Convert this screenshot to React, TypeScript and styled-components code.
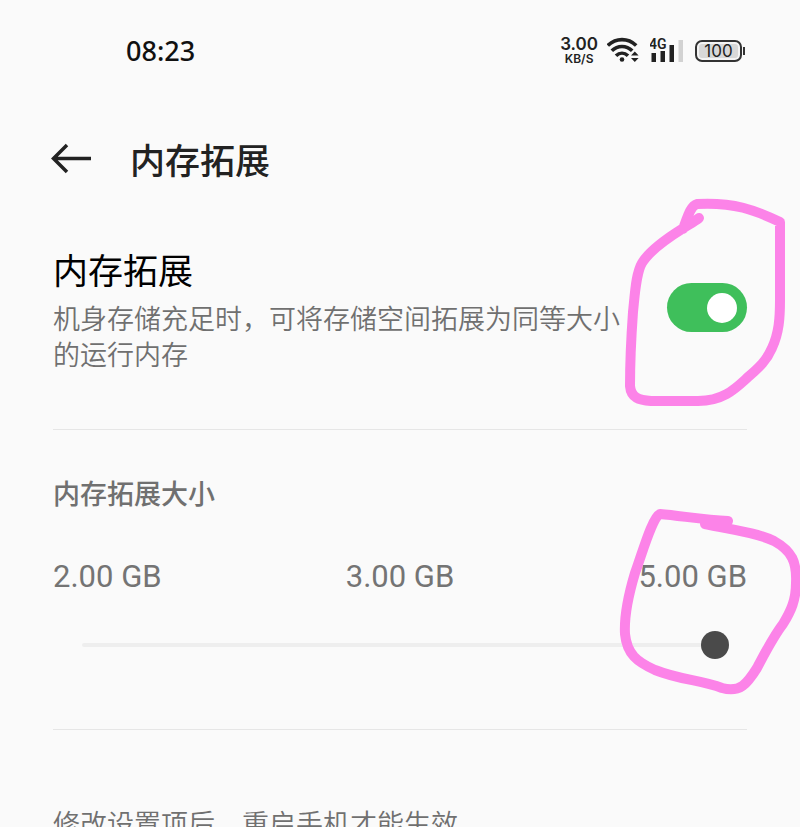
import React, { useState } from 'react';
import styled, { createGlobalStyle } from 'styled-components';

const GlobalStyle = createGlobalStyle`
  html {
    scrollbar-width: none;
  }
  body {
    margin: 0;
    background: #fafafa;
    overflow-x: hidden;
  }
  *, *::before, *::after {
    box-sizing: border-box;
  }
`;

const cjk = '"Noto Sans CJK SC", sans-serif';

const Page = styled.div`
  overflow-x: hidden;
  background: #fafafa;
  color: #222;
  font-family: ${cjk};
`;

const StatusBar = styled.div`
  display: flex;
  align-items: center;
  justify-content: space-between;
  height: 102px;
  padding: 0 55px 0 126px;
`;

const Clock = styled.time`
  font: 500 27px/32px "Noto Sans", sans-serif;
  color: #111;
`;

const StatusIcons = styled.div`
  display: flex;
  align-items: center;
  gap: 9px;
`;

const NetSpeed = styled.div`
  display: flex;
  flex-direction: column;
  align-items: center;
  font-family: "Inter", sans-serif;
  font-weight: 600;
  color: #222;
`;

const SpeedValue = styled.span`
  font-size: 17px;
  line-height: 15px;
`;

const SpeedUnit = styled.span`
  font-size: 12px;
  line-height: 13px;
`;

const SignalText = styled.text`
  font: 600 14px "Roboto", sans-serif;
  fill: #222;
`;

const Battery = styled.div`
  display: flex;
  align-items: center;
`;

const BatteryBody = styled.div`
  display: flex;
  align-items: center;
  justify-content: center;
  width: 47px;
  height: 22px;
  border: 2px solid #333;
  border-radius: 7px;
  background: #d8d8d8;
  box-shadow: inset 0 0 0 2px #f4f4f4;
  font: 400 17px/18px "Inter", sans-serif;
  color: #222;
`;

const BatteryTip = styled.div`
  width: 2px;
  height: 8px;
  margin-left: 1px;
  background: #333;
`;

const Header = styled.header`
  display: flex;
  align-items: center;
  gap: 38px;
  height: 114px;
  padding: 0 50px;
`;

const BackButton = styled.button`
  display: flex;
  padding: 0;
  border: 0;
  background: none;
  cursor: pointer;
`;

const PageTitle = styled.h1`
  margin: 0;
  font-size: 35px;
  line-height: 40px;
  font-weight: 500;
`;

const Section = styled.section`
  margin: 0 53px;
  border-bottom: 1px solid #e6e6e6;
`;

const SwitchRow = styled(Section)`
  display: flex;
  justify-content: space-between;
  gap: 36px;
  padding: 33px 0 57px;
`;

const SwitchText = styled.div`
  flex: 1;
`;

const SwitchTitle = styled.label`
  display: block;
  margin-bottom: 11px;
  font-size: 35px;
  line-height: 40px;
  font-weight: 400;
  color: #000;
`;

const Note = styled.p`
  margin: 0;
  font-size: 27px;
  line-height: 36px;
  font-weight: 350;
  color: #707070;
`;

const SwitchHolder = styled.div`
  position: relative;
  align-self: flex-start;
  margin-top: 34px;
`;

const Switch = styled.input`
  appearance: none;
  display: flex;
  align-items: center;
  width: 80px;
  height: 49px;
  margin: 0;
  padding: 0 10px;
  border-radius: 25px;
  background: #ccc;
  cursor: pointer;

  &::before {
    content: '';
    width: 30px;
    height: 30px;
    border-radius: 50%;
    background: #fff;
  }

  &:checked {
    justify-content: flex-end;
    background: #3fbf5b;
  }
`;

const SizeSection = styled(Section)`
  padding: 45px 0 70px;
`;

const SizeTitle = styled.h2`
  margin: 0 0 48px;
  font-size: 27px;
  line-height: 36px;
  font-weight: 500;
  color: #707070;
`;

const SizePicker = styled.div`
  position: relative;
`;

const SizeLabels = styled.div`
  display: flex;
  justify-content: space-between;
  margin-bottom: 36px;
  font: 400 31px/36px "Roboto", sans-serif;
  color: #747474;
`;

const SliderLine = styled.div`
  display: flex;
  padding: 0 18px 0 29px;
`;

const Slider = styled.input`
  appearance: none;
  flex: 1;
  min-width: 0;
  height: 28px;
  margin: 0;
  background: transparent;
  cursor: pointer;

  &::-webkit-slider-runnable-track {
    height: 4px;
    border-radius: 2px;
    background: #eee;
  }

  &::-webkit-slider-thumb {
    appearance: none;
    width: 28px;
    height: 28px;
    margin-top: -12px;
    border-radius: 50%;
    background: #4a4a4a;
  }
`;

const Footer = styled.footer`
  padding: 75px 53px 24px;
`;

const Marker = styled.svg`
  position: absolute;
  pointer-events: none;
  fill: none;
  stroke: #fc83e8;
  stroke-width: 10px;
  stroke-linecap: round;
  stroke-linejoin: round;
`;

const SwitchMarker = styled(Marker)`
  top: -93px;
  left: -47px;
`;

const SizeMarker = styled(Marker)`
  top: -54px;
  right: -58px;
`;

const sizes = ['2.00 GB', '3.00 GB', '5.00 GB'];

function WifiIcon() {
  return (
    <svg width="34" height="28" viewBox="0 0 34 28" fill="none" stroke="#222" strokeWidth="3.6" aria-label="Wi-Fi">
      <path d="M.8 8.500C9 .6 21 .6 29.200 8.500" />
      <path d="M4.800 13.800C10.600 8 19.400 8 25.200 13.800" />
      <path d="M9 18.800C12.600 15.300 17.400 15.300 21 18.800" />
      <circle cx="15" cy="22.500" r="2.300" fill="#222" stroke="none" />
      <path d="M24 18.500 27.800 14.500 31.600 18.500ZM24 21 27.800 25 31.600 21Z" fill="#222" stroke="none" />
    </svg>
  );
}

function SignalIcon() {
  return (
    <svg width="36" height="28" viewBox="0 0 36 28" fill="#222" aria-label="4G">
      <SignalText x="-1" y="12">4G</SignalText>
      <rect x="1.500" y="16" width="4.500" height="9" />
      <rect x="10.500" y="14" width="4.500" height="11" />
      <rect x="19.500" y="8" width="4.500" height="17" />
      <rect x="28.500" y="3" width="4.500" height="22" fill="#d2d2d2" />
    </svg>
  );
}

export default function App() {
  const [enabled, setEnabled] = useState(true);
  const [size, setSize] = useState(2);

  return (
    <>
      <GlobalStyle />
      <Page>
        <StatusBar>
          <Clock>08:23</Clock>
          <StatusIcons>
            <NetSpeed>
              <SpeedValue>3.00</SpeedValue>
              <SpeedUnit>KB/S</SpeedUnit>
            </NetSpeed>
            <WifiIcon />
            <SignalIcon />
            <Battery>
              <BatteryBody>100</BatteryBody>
              <BatteryTip />
            </Battery>
          </StatusIcons>
        </StatusBar>

        <Header>
          <BackButton type="button" aria-label="返回">
            <svg width="42" height="32" viewBox="0 0 42 32" fill="none" stroke="#222" strokeWidth="3.500">
              <path d="M17 2 3.500 15.500 17 29M3.500 15.500H41" />
            </svg>
          </BackButton>
          <PageTitle>内存拓展</PageTitle>
        </Header>

        <main>
          <SwitchRow>
            <SwitchText>
              <SwitchTitle htmlFor="memory-switch">内存拓展</SwitchTitle>
              <Note id="memory-note">机身存储充足时，可将存储空间拓展为同等大小的运行内存</Note>
            </SwitchText>
            <SwitchHolder>
              <Switch
                id="memory-switch"
                type="checkbox"
                role="switch"
                aria-describedby="memory-note"
                checked={enabled}
                onChange={(e) => setEnabled(e.target.checked)}
              />
              <SwitchMarker width="170" height="225" viewBox="620 190 170 225" aria-hidden="true">
                <path d="M699 218C694 222 688 225 682 229C666 239 650 250 642 263C636 273 635 293 633 312C631 340 630 365 630 386C631 398 639 400 651 401H698C723 401 735 389 747 378C757 369 766 362 772 348C779 333 780 318 780 300L780 222C755 210 734 202 697 204C690 206 687 219 683 229" />
              </SwitchMarker>
            </SwitchHolder>
          </SwitchRow>

          <SizeSection>
            <SizeTitle id="size-title">内存拓展大小</SizeTitle>
            <SizePicker>
              <SizeLabels>
                {sizes.map((s) => (
                  <span key={s}>{s}</span>
                ))}
              </SizeLabels>
              <SliderLine>
                <Slider
                  type="range"
                  min={0}
                  max={2}
                  step={1}
                  value={size}
                  aria-labelledby="size-title"
                  aria-valuetext={sizes[size]}
                  onChange={(e) => setSize(Number(e.target.value))}
                />
              </SliderLine>
              <SizeMarker width="190" height="195" viewBox="615 505 190 195" aria-hidden="true">
                <path d="M728 521C705 520 682 516 660 514C652 518 643 551 635 573C629 593 624 616 625 634C627 654 637 662 655 670C680 680 701 680 722 688C740 693 747 684 757 668C765 653 773 637 783 624C791 611 796 600 796 583C797 562 792 551 774 541C756 532 727 529 705 524L728 521" />
              </SizeMarker>
            </SizePicker>
          </SizeSection>
        </main>

        <Footer>
          <Note>修改设置项后，重启手机才能生效</Note>
        </Footer>
      </Page>
    </>
  );
}
